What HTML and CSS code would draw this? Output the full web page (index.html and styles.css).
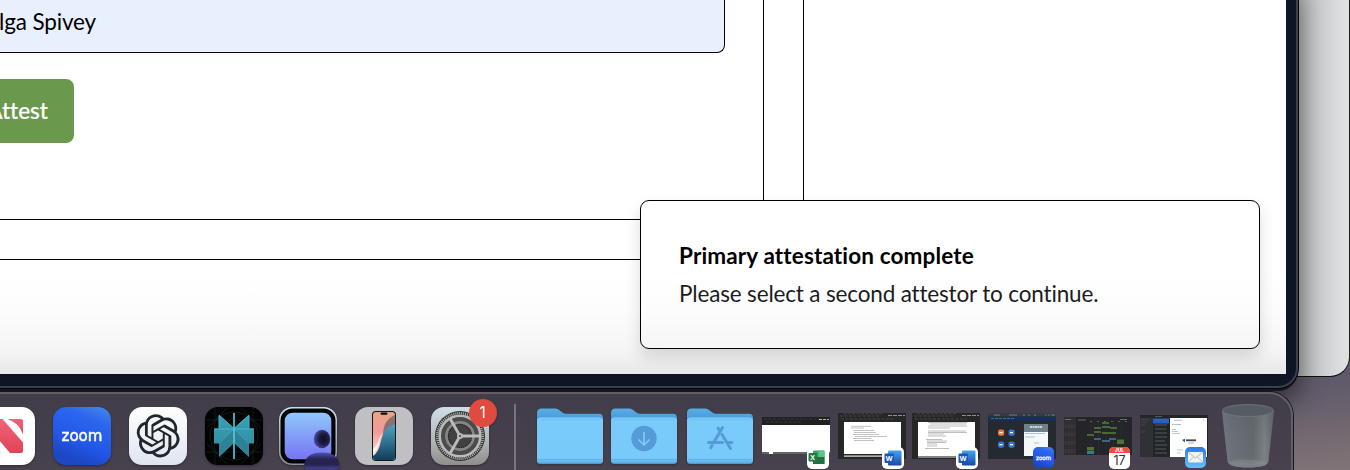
FILE: index.html
```html
<!DOCTYPE html>
<html lang="en">
<head>
<meta charset="utf-8">
<title>Attestation</title>
<link rel="stylesheet" href="styles.css">
</head>
<body>
<div class="desktop">
  <div class="back-window"></div>
  <div class="window">
    <main class="page">
      <section class="outer-panel">
        <div class="inner-panel">
          <div class="name-field">lga Spivey</div>
          <button class="attest-button">Attest</button>
        </div>
      </section>
      <div class="toast" role="status">
        <strong class="toast-title">Primary attestation complete</strong>
        <span class="toast-text">Please select a second attestor to continue.</span>
      </div>
      <div class="page-shade"></div>
    </main>
  </div>

  <nav class="dock">
    <svg width="0" height="0" class="defs">
      <defs>
        <linearGradient id="news" x1="0" y1="0" x2="0" y2="1"><stop offset="0" stop-color="#f0647a"/><stop offset="1" stop-color="#e14356"/></linearGradient>
        <linearGradient id="zoomg" x1="1" y1="0" x2="0.6" y2="1"><stop offset="0" stop-color="#4a8ae8"/><stop offset=".3" stop-color="#2a66ee"/><stop offset=".7" stop-color="#2257e8"/><stop offset="1" stop-color="#1d47c4"/></linearGradient>
        <linearGradient id="gpt" x1="0" y1="0" x2="0" y2="1"><stop offset="0" stop-color="#fff"/><stop offset="1" stop-color="#dfe5ef"/></linearGradient>
        <linearGradient id="teal" x1="0" y1="0" x2="0" y2="1"><stop offset="0" stop-color="#3aa0b2"/><stop offset=".5" stop-color="#3594aa"/><stop offset="1" stop-color="#2b8ba0"/></linearGradient>
        <linearGradient id="screen" x1="0" y1="0" x2="0" y2="1"><stop offset="0" stop-color="#90c8fb"/><stop offset="1" stop-color="#7774f3"/></linearGradient>
        <linearGradient id="rim" x1="0" y1="0" x2="0" y2="1"><stop offset="0" stop-color="#c9e2ea"/><stop offset="1" stop-color="#8b8f91"/></linearGradient>
        <radialGradient id="head" cx=".6" cy=".5" r=".6"><stop offset="0" stop-color="#10101c"/><stop offset=".5" stop-color="#1d1c43"/><stop offset="1" stop-color="#4f4db0"/></radialGradient>
        <linearGradient id="torso" x1="0" y1="0" x2="0" y2="1"><stop offset="0" stop-color="#5250b4"/><stop offset=".4" stop-color="#252350"/><stop offset=".7" stop-color="#25244e"/><stop offset="1" stop-color="#4543a0"/></linearGradient>
        <linearGradient id="set" x1="0" y1="0" x2="0" y2="1"><stop offset="0" stop-color="#d0dfe6"/><stop offset=".6" stop-color="#b1b5b6"/><stop offset="1" stop-color="#8f8e89"/></linearGradient>
        <linearGradient id="sea" x1="0" y1="0" x2="0" y2="1"><stop offset="0" stop-color="#4ca6c5"/><stop offset="1" stop-color="#123d57"/></linearGradient>
        <linearGradient id="coral" x1="0" y1="0" x2="0" y2="1"><stop offset="0" stop-color="#e7a583"/><stop offset=".4" stop-color="#f39a98"/><stop offset="1" stop-color="#fbe9e6"/></linearGradient>
        <linearGradient id="tab" x1="0" y1="0" x2="0" y2="1"><stop offset="0" stop-color="#5aaee4"/><stop offset=".45" stop-color="#4a9edb"/><stop offset=".7" stop-color="#3c8ed0"/></linearGradient>
        <linearGradient id="folder" x1="0" y1="0" x2="0" y2="1"><stop offset="0" stop-color="#6bbdf0"/><stop offset=".08" stop-color="#79cbfa"/><stop offset=".86" stop-color="#78cafa"/><stop offset=".96" stop-color="#62b5ea"/><stop offset="1" stop-color="#4594cc"/></linearGradient>
        <linearGradient id="mail" x1="0" y1="0" x2="0" y2="1"><stop offset="0" stop-color="#2f74ec"/><stop offset="1" stop-color="#62c2fb"/></linearGradient>
        <linearGradient id="bin" gradientUnits="userSpaceOnUse" x1="1222" y1="0" x2="1274" y2="0"><stop offset="0" stop-color="#747a7f"/><stop offset=".2" stop-color="#6b7176"/><stop offset=".6" stop-color="#63696e"/><stop offset=".82" stop-color="#7c8285"/><stop offset="1" stop-color="#5f6569"/></linearGradient>
        <linearGradient id="binshade" gradientUnits="userSpaceOnUse" x1="0" y1="411" x2="0" y2="468"><stop offset="0" stop-color="#50565b" stop-opacity=".3"/><stop offset=".75" stop-color="#60666b" stop-opacity="0"/><stop offset="1" stop-color="#a4a8aa" stop-opacity=".45"/></linearGradient>
        <linearGradient id="word" x1="0" y1="0" x2="0" y2="1"><stop offset="0" stop-color="#44a2ec"/><stop offset=".45" stop-color="#2f7cd6"/><stop offset="1" stop-color="#17479e"/></linearGradient>
        <g id="folder-shape">
          <path d="M0 5q0-4.500 4.500-4.500h14q2 0 4 1.800l2.500 2q1.600 1.400 3.500 1.400h33.500q4 0 4 4v10H0z" fill="url(#tab)"/>
          <rect y="9.500" width="66" height="46.500" rx="3.500" fill="url(#folder)"/>
          <path d="M.5 13q0-3 3-3h59q3 0 3 3" fill="none" stroke="#9bd9fc" stroke-width=".7" opacity=".7"/>
          <path d="M1 51.500h64" stroke="#55aadf" stroke-width=".6"/>
        </g>
        <g id="word-badge">
          <rect width="22" height="22" rx="5" fill="#fff"/>
          <rect x="6" y="3.500" width="13.500" height="15" rx="1.200" fill="url(#word)"/>
          <rect x="2.500" y="6.500" width="9.500" height="9.500" rx="1" fill="#1c57b8"/>
          <text x="7.200" y="14" text-anchor="middle" class="badge-letter">W</text>
        </g>
      </defs>
    </svg>

    <div class="apps">
      <svg class="app" viewBox="-23 404 58 66"><rect x="-23" y="407" width="58" height="58" rx="13" fill="#fff"/><path d="M-17 434q4 15 18 19h-16q-2 0-2-2z" fill="url(#news)"/><path d="M7.500 419H21q2 0 2 2v13.500Q19.500 423 7.500 419z" fill="url(#news)"/><path d="M-17 419H2.500L23 442.500V451q0 2-2 2H10L-17 421z" fill="url(#news)"/></svg>
      <svg class="app" viewBox="53 404 58 66"><rect x="53" y="407" width="58" height="58" rx="13" fill="url(#zoomg)"/><text x="61.500" y="440.500" textLength="41" lengthAdjust="spacingAndGlyphs" class="zoom-word">zoom</text></svg>
      <svg class="app" viewBox="129 404 58 66"><rect x="129" y="407" width="58" height="58" rx="13" fill="url(#gpt)"/><path transform="translate(136.500 414.200) scale(1.800)" fill="#20262b" d="M22.2819 9.8211a5.9847 5.9847 0 0 0-.5157-4.9108 6.0462 6.0462 0 0 0-6.5098-2.9A6.0651 6.0651 0 0 0 4.9807 4.1818a5.9847 5.9847 0 0 0-3.9977 2.9 6.0462 6.0462 0 0 0 .7427 7.0966 5.98 5.98 0 0 0 .511 4.9107 6.051 6.051 0 0 0 6.5146 2.9001A5.9847 5.9847 0 0 0 13.2599 24a6.0557 6.0557 0 0 0 5.7718-4.2058 5.9894 5.9894 0 0 0 3.9977-2.9001 6.0557 6.0557 0 0 0-.7475-7.0729zm-9.022 12.6081a4.4755 4.4755 0 0 1-2.8764-1.0408l.1419-.0804 4.7783-2.7582a.7948.7948 0 0 0 .3927-.6813v-6.7369l2.02 1.1686a.071.071 0 0 1 .038.052v5.5826a4.504 4.504 0 0 1-4.4945 4.4944zm-9.6607-4.1254a4.4708 4.4708 0 0 1-.5346-3.0137l.142.0852 4.783 2.7582a.7712.7712 0 0 0 .7806 0l5.8428-3.3685v2.3324a.0804.0804 0 0 1-.0332.0615L9.74 19.9502a4.4992 4.4992 0 0 1-6.1408-1.6464zM2.3408 7.8956a4.485 4.485 0 0 1 2.3655-1.9728V11.6a.7664.7664 0 0 0 .3879.6765l5.8144 3.3543-2.0201 1.1685a.0757.0757 0 0 1-.071 0l-4.8303-2.7865A4.504 4.504 0 0 1 2.3408 7.872zm16.5963 3.8558L13.1038 8.364 15.1192 7.2a.0757.0757 0 0 1 .071 0l4.8303 2.7913a4.4944 4.4944 0 0 1-.6765 8.1042v-5.6772a.79.79 0 0 0-.407-.667zm2.0107-3.0231l-.142-.0852-4.7735-2.7818a.7759.7759 0 0 0-.7854 0L9.409 9.2297V6.8974a.0662.0662 0 0 1 .0284-.0615l4.8303-2.7866a4.4992 4.4992 0 0 1 6.6802 4.66zM8.3065 12.863l-2.02-1.1638a.0804.0804 0 0 1-.038-.0567V6.0742a4.4992 4.4992 0 0 1 7.3757-3.4537l-.142.0805L8.704 5.459a.7948.7948 0 0 0-.3927.6813zm1.0976-2.3654l2.602-1.4998 2.6069 1.4998v2.9994l-2.5974 1.4997-2.6067-1.4997Z"/></svg>
      <svg class="app" viewBox="205 404 58 66"><rect x="205" y="407" width="58" height="58" rx="13" fill="#020303"/><g stroke="#1c2022" stroke-width=".7" fill="none"><path d="M215 408v56M253 408v56M206 420h56M206 452h56M207 428l20-20M241 408l20 20M207 444l20 20M241 464l20-20"/><circle cx="234" cy="436" r="24"/></g><path d="M219 415l15 13.500 15-13.500v13.500h5v15h-5v13.500l-15-14-15 14V443.500h-5v-15h5z" fill="url(#teal)"/><path d="M234 429l-15 14.500v13l15-14zM234 429l15 14.500v13l-15-14z" fill="#2f8198"/><path d="M219 415l15 13.500 15-13.500M214.500 429H234h19.500M219 415.500V428M249 415.500V428" fill="none" stroke="#46b7c9" stroke-width="1"/><path d="M234 429l-15 14.500M234 429l15 14.500" stroke="#3da6ba" stroke-width=".8"/><path d="M234 413v46" stroke="#51c6d9" stroke-width="1.700"/></svg>
      <svg class="app app-presenter" viewBox="279 404 58 66"><rect x="279" y="407" width="58" height="58" rx="13" fill="url(#rim)"/><rect x="280.500" y="408.500" width="55" height="55" rx="12" fill="#030408"/><rect x="284.700" y="412.700" width="46.600" height="46.600" rx="8" fill="url(#screen)"/><ellipse cx="322" cy="439" rx="8.300" ry="9.200" fill="url(#head)"/><path d="M304 466q1-13.500 18-13.500T339.500 466q0 3.500-6 3.500h-23.500q-6 0-6-3.500z" fill="url(#torso)"/></svg>
      <svg class="app" viewBox="355 404 58 66"><rect x="355" y="407" width="58" height="58" rx="13" fill="#bfbfc4"/><rect x="372" y="411" width="24" height="50" rx="4" fill="#11181e"/><rect x="373" y="412" width="22" height="48" rx="3" fill="url(#coral)"/><path d="M395 415q-12 5-12 20l12-9z" fill="#8b7170"/><path d="M395 424q-12 4-14 17-2 11-8 15v1q0 3 3 3h16q3 0 3-3z" fill="url(#sea)"/><path d="M383 434q-3 4-4 10-2 7-6 10v-5q4-3 5.500-8t4.500-7z" fill="#fff" opacity=".8"/><rect x="380.500" y="412.500" width="7" height="2.200" rx="1.100" fill="#080808"/></svg>
      <svg class="app" viewBox="431 404 58 66"><rect x="431" y="407" width="58" height="58" rx="13" fill="url(#set)"/><circle cx="460" cy="436" r="25" fill="#303030"/><circle cx="460" cy="436" r="22.800" fill="none" stroke="#b5b8b7" stroke-width="2.400" stroke-dasharray="1 1"/><circle cx="460" cy="436" r="20.300" fill="#4b4b4b" stroke="#b9bcbb" stroke-width="2.600"/><circle cx="460" cy="436" r="13.500" fill="#414141" stroke="#858786" stroke-width="2.800"/><circle cx="460" cy="436" r="11.600" fill="none" stroke="#222" stroke-width="1.200" stroke-dasharray="1 1"/><path d="M460 436h20M460 436l-10-17.500M460 436l-10 17.500" stroke="#babdbc" stroke-width="2.800"/><circle cx="460" cy="436" r="3" fill="#b7baba"/><circle cx="460" cy="436" r="1" fill="#444"/><circle cx="483" cy="413" r="14" fill="#e04a3f"/><text x="482.500" y="418" text-anchor="middle" class="count">1</text></svg>
    </div>
    <div class="separator"></div>
    <div class="folders">
      <svg class="folder" viewBox="0 -4 66 66"><use href="#folder-shape"/></svg>
      <svg class="folder" viewBox="0 -4 66 66"><use href="#folder-shape"/><circle cx="33" cy="30.500" r="12.700" fill="#559bd8"/><path d="M33 24.500v12M28 32l5 5 5-5" fill="none" stroke="#80cbf6" stroke-width="1.700" stroke-linecap="round" stroke-linejoin="round"/></svg>
      <svg class="folder folder-last" viewBox="0 -4 66 66"><use href="#folder-shape"/><path d="M31 20l2 3.500M35.500 19.500l-8.500 14.500M21.500 34.500h14M25 37.500l-1.300 2.300M35 26.500l8.500 14M40 34.500h4.800" fill="none" stroke="#559bd8" stroke-width="3" stroke-linecap="round"/></svg>
    </div>
    <div class="thumbs">
      <svg class="thumb" viewBox="762 404 68 66"><rect x="762" y="417" width="68" height="37" fill="#fff"/><path d="M762 417h68v8h-68z" fill="#202020"/><path d="M764 419h58M766 422h35" stroke="#484848" stroke-width=".7" stroke-dasharray="3 1.500"/><path d="M819 419.500h10" stroke="#bbb" stroke-width="1" stroke-dasharray="3 1"/><path d="M762 453h7M773 453h57" stroke="#333" stroke-width="1.400"/><rect x="807" y="447" width="22" height="22" rx="5" fill="#fff"/><rect x="813" y="450.500" width="11.500" height="13.500" rx="1" fill="#38a268"/><path d="M818.500 450.500h6v6.500h-6z" fill="#5bc48b"/><path d="M813 457h11.500v7H813z" fill="#236f43"/><rect x="808.500" y="453" width="8.500" height="8.500" rx="1" fill="#237a3f"/><text x="812.700" y="460" text-anchor="middle" class="badge-letter">X</text></svg>
      <svg class="thumb" viewBox="838 404 68 66"><rect x="838" y="413" width="68" height="46" fill="#262828"/><path d="M844 422h57v32h-57z" fill="#fff"/><path d="M844 455.500h50v1.200h-50z" fill="#ddd"/><path d="M843 413.800h40M840 416h40M841 419h52" stroke="#5a5a5a" stroke-width=".6" stroke-dasharray="3 1.500"/><path d="M888 415.500h17" stroke="#aaa" stroke-width=".8" stroke-dasharray="4 1"/><path d="M851 426.300h20M851 428h13M853 430.500h21M854 432.500h22M853 434.500h26M855 436.500h32M853 438.500h18M854 440.500h20" stroke="#999" stroke-width=".6"/><use href="#word-badge" x="882" y="447"/></svg>
      <svg class="thumb thumb-tight" viewBox="912 404 68 66"><rect x="912" y="413" width="68" height="46" fill="#262828"/><path d="M918 422h57v34h-57z" fill="#fff"/><path d="M918 457h50" stroke="#ddd"/><path d="M917 413.800h40M914 416h40M915 419h52" stroke="#5a5a5a" stroke-width=".6" stroke-dasharray="3 1.500"/><path d="M962 415.500h17" stroke="#aaa" stroke-width=".8" stroke-dasharray="4 1"/><path d="M928 422.500h39M930 424h36M928 426h39M928 428h22M928 431h38M928 432.500h39M928 434h16M928 436h18M926 439.500h16M927 441h20M927 442.500h19M927 444h10M927 446h10M925 448.500h24" stroke="#909090" stroke-width=".6"/><use href="#word-badge" x="956" y="447"/></svg>
      <svg class="thumb" viewBox="988 404 68 66"><rect x="988" y="413" width="68" height="46" fill="#252a31"/><path d="M988 413h68v3.500h-68z" fill="#353b42"/><path d="M994 415h6M1009 415h8M1023 415h2M1028 415h2M1034 415h2M1045 415h1.500M1048 415h1.500M1051 415h4" stroke="#858b90" stroke-width=".8"/><path d="M988 417h68v3.500h-68z" fill="#11315f"/><path d="M991 418.500h24" stroke="#8088a4" stroke-width=".6" stroke-dasharray="3 1"/><rect x="998" y="429.500" width="6.200" height="6.200" rx="2" fill="#f27334"/><rect x="1008.500" y="429.500" width="6.200" height="6.200" rx="2" fill="#3277d8"/><rect x="998" y="441.500" width="6.200" height="6.200" rx="2" fill="#3277d8"/><rect x="1008.500" y="441.500" width="6.200" height="6.200" rx="2" fill="#3277d8"/><path d="M999.500 432.600h3M1010 432.600h3M999.500 444.600h3M1010 444.600h3" stroke="#fff" stroke-width="1.400"/><path d="M1024 424h24v32h-24z" fill="#f4f8fa"/><path d="M1024 424h24v8h-24z" fill="#71818c"/><path d="M1030 427h12" stroke="#e8eef0" stroke-width="1.500" stroke-dasharray="2 .5"/><path d="M1025 433.500h20M1025 437h10M1034 443h5M1034 449h4" stroke="#8aaeda" stroke-width=".7"/><rect x="1033" y="447" width="21" height="21" rx="5" fill="url(#zoomg)"/><text x="1036" y="459.500" textLength="15" lengthAdjust="spacingAndGlyphs" class="zoom-small">zoom</text></svg>
      <svg class="thumb" viewBox="1064 404 68 66"><rect x="1064" y="417" width="68" height="38" fill="#252529"/><path d="M1064 417h12v38h-12z" fill="#302e32"/><g stroke="#55545a" stroke-width="4" stroke-dasharray=".6 .9"><path d="M1065 426.500h10M1065 434.500h10M1065 443h10M1065 451h10" opacity=".5"/></g><path d="M1065 419.500h6M1078 420h8M1120 419.500h7" stroke="#8a8a8a" stroke-width=".7"/><path d="M1090 421.500h38" stroke="#77767a" stroke-width=".7" stroke-dasharray="2 5"/><path d="M1091 422v32M1098.500 422v32M1106 422v32M1113.500 422v32M1121 422v32" stroke="#35353a" stroke-width=".5"/><path d="M1102 423h7M1094 428h7M1102 427h8M1110 428h7M1094 432h7M1087 435h7M1102 433h14" stroke="#456b2e" stroke-width="2"/><path d="M1094 439h7M1102 441h8M1109 439h7" stroke="#326a84" stroke-width="2"/><path d="M1117 439.500h7v4.500h-7zM1087 447h7v3.500h-7z" fill="#4d732e"/><path d="M1087 451h7v3h-7z" fill="#377991"/><rect x="1109" y="447" width="21" height="22" rx="5" fill="#fff"/><path d="M1109 452q0-5 5-5h11q5 0 5 5v1h-21z" fill="#ea4b43"/><text x="1119.500" y="452.300" text-anchor="middle" class="cal-month">JUL</text><text x="1119.500" y="464.700" text-anchor="middle" class="cal-day">17</text></svg>
      <svg class="thumb" viewBox="1140 404 68 66"><rect x="1140" y="415" width="68" height="42" fill="#242529"/><path d="M1140 417.500h13V457h-13z" fill="#303136"/><path d="M1141 419.500h8M1141 422h6M1141 425h4M1141 432h4" stroke="#4c4d54" stroke-width=".7"/><path d="M1153 418.500h16v5h-16z" fill="#235dce"/><path d="M1155 416.500h7M1155 420h12M1155 425h12M1155 429h11M1155 433h12M1155 437h12M1155 441h10M1155 445h12M1155 449h11M1155 453h12" stroke="#666e7c" stroke-width=".7"/><path d="M1170 418h37v39h-37z" fill="#fff"/><path d="M1174 420.300h8M1174 424.500h7M1203 420h1" stroke="#aaa" stroke-width=".8"/><circle cx="1172.600" cy="424.500" r=".8" fill="#dd983d"/><path d="M1172 429.500h4M1172 431.500h6M1172 433.500h8M1177 450h6M1177 453h4" stroke="#8fb3e0" stroke-width=".7"/><path d="M1182 440l3-1.200v3.500z" fill="#17676a"/><path d="M1186 440.300h10" stroke="#444" stroke-width="1.800"/><path d="M1188 443h6" stroke="#86a" stroke-width=".6"/><rect x="1185" y="447" width="21" height="21" rx="5" fill="url(#mail)"/><rect x="1188" y="452" width="15" height="10.500" rx="1" fill="#f2f2f0"/><path d="M1188.500 452.500l7 5.500 7-5.500M1188.500 462l5-5M1202.500 462l-5-5" fill="none" stroke="#a8aaaa" stroke-width=".8"/></svg>
    </div>
    <svg class="bin" viewBox="1221 404 54 66"><path d="M1222 411l5.500 50q.5 6.500 20.500 6.500t20.500-6.500l5.500-50z" fill="url(#bin)"/><path d="M1222 411l5.500 50q.5 6.500 20.500 6.500t20.500-6.500l5.500-50z" fill="url(#binshade)"/><ellipse cx="1248" cy="410.500" rx="25.600" ry="6" fill="#565c61" stroke="#747a7e" stroke-width=".8"/><ellipse cx="1247" cy="462.500" rx="17" ry="3" fill="#9a9fa1" opacity=".25"/></svg>
  </nav>
</div>
</body>
</html>
```
FILE: styles.css
```css
* { box-sizing: border-box; }

body {
  margin: 0;
  font-family: Lato, "Liberation Sans", sans-serif;
  font-variant-ligatures: none;
}

.desktop {
  position: relative;
  width: 1350px;
  height: 470px;
  overflow: hidden;
  background: linear-gradient(175deg, #565165 75%, #625b6a 86%, #807477 100%);
}

.back-window {
  position: absolute;
  left: 1200px;
  top: -40px;
  width: 150px;
  height: 417px;
  border-right: 1px solid #222;
  border-bottom: 1px solid #111;
  border-radius: 0 0 20px 0;
  background: linear-gradient(90deg, #b2b3b3 66%, #cbcccd 80%, #dedfe0 96%);
}

.window {
  position: absolute;
  left: -20px;
  top: -20px;
  width: 1318px;
  height: 408px;
  padding: 20px 0 0 20px;
  border: solid #3c404e;
  border-width: 0 2px 2px 0;
  border-radius: 0 0 20px 0;
  background: #0e1524;
  box-shadow: 0 0 0 1px #050507, 0 3px 0 0 #17171b, 0 14px 26px rgba(0, 0, 0, .5);
}

.page {
  position: relative;
  width: 1286px;
  height: 374px;
  background: #fff;
  overflow: hidden;
}

.outer-panel {
  width: 804px;
  height: 260px;
  padding: 0 39px 39px 0;
  border: solid #000;
  border-width: 0 1px 1px 0;
}

.inner-panel {
  display: flex;
  flex-direction: column;
  align-items: flex-start;
  gap: 26px;
  height: 220px;
  border: solid #000;
  border-width: 0 1px 1px 0;
}

.name-field {
  display: flex;
  justify-content: flex-end;
  width: 725px;
  height: 53px;
  padding: 7px 628px 0 0;
  border: solid #000;
  border-width: 0 1px 1px 0;
  border-radius: 0 0 8px 0;
  background: #e8effd;
  font-size: 22.5px;
  line-height: 30px;
  letter-spacing: -.15px;
  white-space: nowrap;
}

.attest-button {
  display: flex;
  align-items: center;
  justify-content: flex-end;
  width: 74px;
  height: 64px;
  padding: 0 26px 0 0;
  border: 0;
  border-radius: 0 8px 8px 0;
  background: #6a994e;
  color: #fff;
  font: 500 22.5px/30px Lato, sans-serif;
  font-variant-ligatures: none;
  -webkit-text-stroke: .2px #fff;
}

.toast {
  position: absolute;
  left: 640px;
  top: 200px;
  display: flex;
  flex-direction: column;
  gap: 8px;
  width: 620px;
  height: 149px;
  padding: 40px 38px;
  border: 1px solid #000;
  border-radius: 9px;
  background: #fff;
  box-shadow: 0 8px 16px rgba(30, 10, 20, .14);
  font-size: 22.5px;
  line-height: 30px;
  white-space: nowrap;
}

.toast-title { font-weight: 700; color: #000; letter-spacing: .14px; }
.toast-text { color: #1c1c1e; letter-spacing: -.16px; }

.page-shade {
  position: absolute;
  inset: 270px 0 0 0;
  background: linear-gradient(transparent, rgba(0, 0, 0, .012) 40%, rgba(0, 0, 0, .04) 76%, rgba(0, 0, 0, .09));
}

.dock {
  position: absolute;
  left: -40px;
  top: 392px;
  display: flex;
  width: 1333px;
  height: 100px;
  padding: 10px 0 0 15px;
  border: 2px solid #625d68;
  border-radius: 24px;
  background: linear-gradient(#413d49, #48414e 78%);
  box-shadow: 0 0 0 1px #17161b;
}

.defs { position: absolute; }
.dock svg { display: block; flex: none; overflow: visible; }

.apps { display: flex; gap: 18px; }
.app { width: 58px; height: 66px; filter: drop-shadow(0 1px 1px rgba(0, 0, 0, .35)); }
.app-presenter { margin-left: -2px; }

.separator {
  flex: none;
  width: 2px;
  height: 80px;
  margin: 0 21px 0 25px;
  background: #79747f;
}

.folders { display: flex; gap: 8px; }
.folder { width: 66px; height: 66px; filter: drop-shadow(0 1px 1px rgba(0, 0, 0, .3)); }
.folder-last { margin-left: 2px; }

.thumbs { display: flex; gap: 8px; margin-left: 9px; }
.thumb { width: 68px; height: 66px; }
.thumb-tight { margin-left: -2px; }

.bin { width: 54px; height: 66px; margin-left: 13px; }

.zoom-word { font: 400 16px "DejaVu Sans", sans-serif; fill: #fff; stroke: #fff; stroke-width: .5px; }
.zoom-small { font: 400 6px "DejaVu Sans", sans-serif; fill: #fff; stroke: #fff; stroke-width: .3px; }
.count { font: 400 16px Inter, sans-serif; fill: #fff; }
.badge-letter { font: 700 7px "Open Sans", sans-serif; fill: #fff; }
.cal-month { font: 700 5px Inter, sans-serif; fill: #fff; }
.cal-day { font: 400 12.500px Inter, sans-serif; fill: #333; }
```
